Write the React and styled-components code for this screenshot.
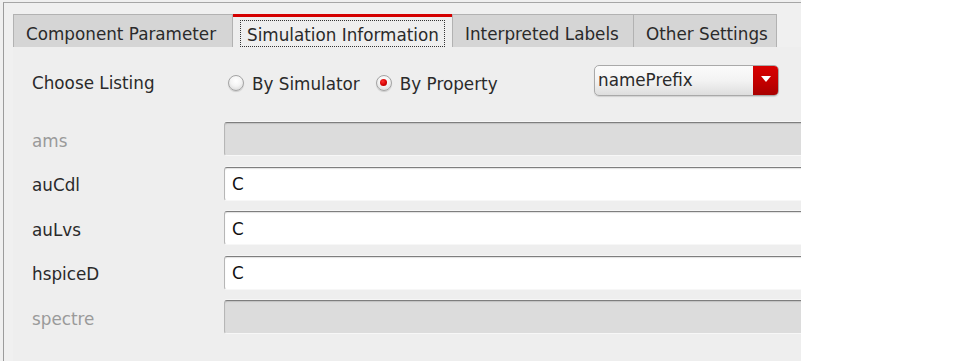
import React from 'react';
import styled, { createGlobalStyle } from 'styled-components';

const GlobalStyle = createGlobalStyle`
    body {
        margin: 0;
        background: #ffffff;
        font-family: "DejaVu Sans", "Liberation Sans", sans-serif;
    }
`

const tabs = [
    { label: 'Component Parameter', width: 220 },
    { label: 'Simulation Information', width: 219, active: true },
    { label: 'Interpreted Labels', width: 182 },
    { label: 'Other Settings', width: 144 },
]

const fields = [
    { name: 'ams', disabled: true },
    { name: 'auCdl', value: 'C' },
    { name: 'auLvs', value: 'C' },
    { name: 'hspiceD', value: 'C' },
    { name: 'spectre', disabled: true },
]

const App = () => {
    return (
        <Frame>
            <GlobalStyle />
            <Inner>
                <TabBar>
                    {tabs.map((t) => (
                        <Tab key={t.label} width={t.width} active={t.active}>
                            {t.active ? <Focus>{t.label}</Focus> : t.label}
                        </Tab>
                    ))}
                </TabBar>
                <Panel>
                    <ListingRow>
                        <Label shift={5}>Choose Listing</Label>
                        <RadioGroup>
                            <RadioItem>
                                <Radio />
                                By Simulator
                            </RadioItem>
                            <RadioItem>
                                <Radio checked />
                                By Property
                            </RadioItem>
                        </RadioGroup>
                        <Dropdown>
                            <DropdownText>namePrefix</DropdownText>
                            <DropdownButton>
                                <svg width="10" height="6" viewBox="0 0 10 6">
                                    <path d="M0 0 L10 0 L5 6 Z" fill="#ffffff" />
                                </svg>
                            </DropdownButton>
                        </Dropdown>
                    </ListingRow>
                    <FieldGrid>
                        {fields.map((f) => (
                            <React.Fragment key={f.name}>
                                <Label disabled={f.disabled} shift={3}>{f.name}</Label>
                                <Field disabled={f.disabled}>{f.value}</Field>
                            </React.Fragment>
                        ))}
                    </FieldGrid>
                </Panel>
            </Inner>
        </Frame>
    )
}

export default App;

const Frame = styled.div`
    width: 801px;
    height: 361px;
    box-sizing: border-box;
    padding: 2px 0 0 3px;
    background: #f0f0f0;
    overflow: hidden;
    font-size: 16.8px;
    color: #2a2a2a;
`

const Inner = styled.div`
    height: 100%;
    box-sizing: border-box;
    border-top: 1px solid #a6a6a6;
    border-left: 1px solid #9c9c9c;
    padding: 11px 0 0 9px;
    display: flex;
    flex-direction: column;
`

const TabBar = styled.div`
    display: flex;
    height: 33px;
`

const Tab = styled.div`
    width: ${(p) => p.width}px;
    flex-shrink: 0;
    box-sizing: border-box;
    display: flex;
    align-items: center;
    padding: 6px 0 0 ${(p) => (p.active ? 7 : 12)}px;
    white-space: nowrap;
    background: ${(p) => (p.active ? '#eeeeee' : '#d5d5d5')};
    border: 1px solid #b2b2b2;
    border-bottom: none;
    margin-left: -1px;
    ${(p) => p.active && `
        border: none;
        border-top: 3px solid #d40000;
        padding-top: 2px;
        margin-left: 0;
        margin-right: 1px;
    `}
    &:first-child {
        margin-left: 0;
    }
`

const Focus = styled.span`
    display: flex;
    align-items: center;
    height: 27px;
    padding: 3px 5px 0 6px;
    border: 1px dotted #333;
    box-sizing: border-box;
    margin-top: 1px;
`

const Panel = styled.div`
    flex: 1;
    background: #eeeeee;
    padding: 18px 0 0 19px;
`

const ListingRow = styled.div`
    display: flex;
    align-items: center;
    height: 31px;
`

const Label = styled.div`
    width: 192px;
    flex-shrink: 0;
    color: ${(p) => (p.disabled ? '#9a9a9a' : '#2a2a2a')};
    display: flex;
    align-items: center;
    padding-top: ${(p) => p.shift || 0}px;
`

const RadioGroup = styled.div`
    width: 370px;
    flex-shrink: 0;
    display: flex;
    align-items: center;
    gap: 16px;
    padding: 6px 0 0 4px;
    box-sizing: border-box;
`

const RadioItem = styled.label`
    display: flex;
    align-items: center;
    gap: 8px;
`

const Radio = styled.span`
    width: 16px;
    height: 16px;
    box-sizing: border-box;
    border-radius: 50%;
    border: 1px solid #a4a4a4;
    background: radial-gradient(circle at 50% 35%, #ffffff 0%, #f4f4f4 45%, #d0d0d0 100%);
    box-shadow: 0 1px 1px rgba(0, 0, 0, 0.15);
    display: flex;
    align-items: center;
    justify-content: center;
    margin-top: -2px;
    &::after {
        content: '';
        display: ${(p) => (p.checked ? 'block' : 'none')};
        width: 7px;
        height: 7px;
        border-radius: 50%;
        background: radial-gradient(circle at 40% 35%, #ff3030 0%, #d00000 60%, #a00000 100%);
    }
`

const Dropdown = styled.div`
    width: 185px;
    height: 31px;
    box-sizing: border-box;
    display: flex;
    border: 1px solid #a9a9a9;
    border-radius: 5px;
    background: linear-gradient(#fbfbfb, #f3f3f3 50%, #dedede);
    box-shadow: 0 1px 1px rgba(0, 0, 0, 0.12);
    overflow: hidden;
`

const DropdownText = styled.div`
    flex: 1;
    display: flex;
    align-items: center;
    padding-left: 3px;
    padding-bottom: 1px;
`

const DropdownButton = styled.div`
    width: 25px;
    display: flex;
    align-items: center;
    justify-content: center;
    padding-bottom: 3px;
    box-sizing: border-box;
    background: linear-gradient(#d80000, #c00000 60%, #a80000);
`

const FieldGrid = styled.div`
    display: grid;
    grid-template-columns: 192px 620px;
    grid-auto-rows: 34px;
    row-gap: 10.5px;
    margin-top: 26px;
`

const Field = styled.div`
    box-sizing: border-box;
    display: flex;
    align-items: center;
    padding: 1px 0 0 7px;
    background: ${(p) => (p.disabled ? '#dcdcdc' : '#ffffff')};
    border-top: 1px solid #7e7e7e;
    border-left: 1px solid #b6b6b6;
    border-bottom: 1px solid #f7f7f7;
    border-radius: 3px 0 0 3px;
    box-shadow: inset 0 1px 1px rgba(0, 0, 0, 0.12), 0 -1px 0 #f6f6f6;
    color: #111;
`
